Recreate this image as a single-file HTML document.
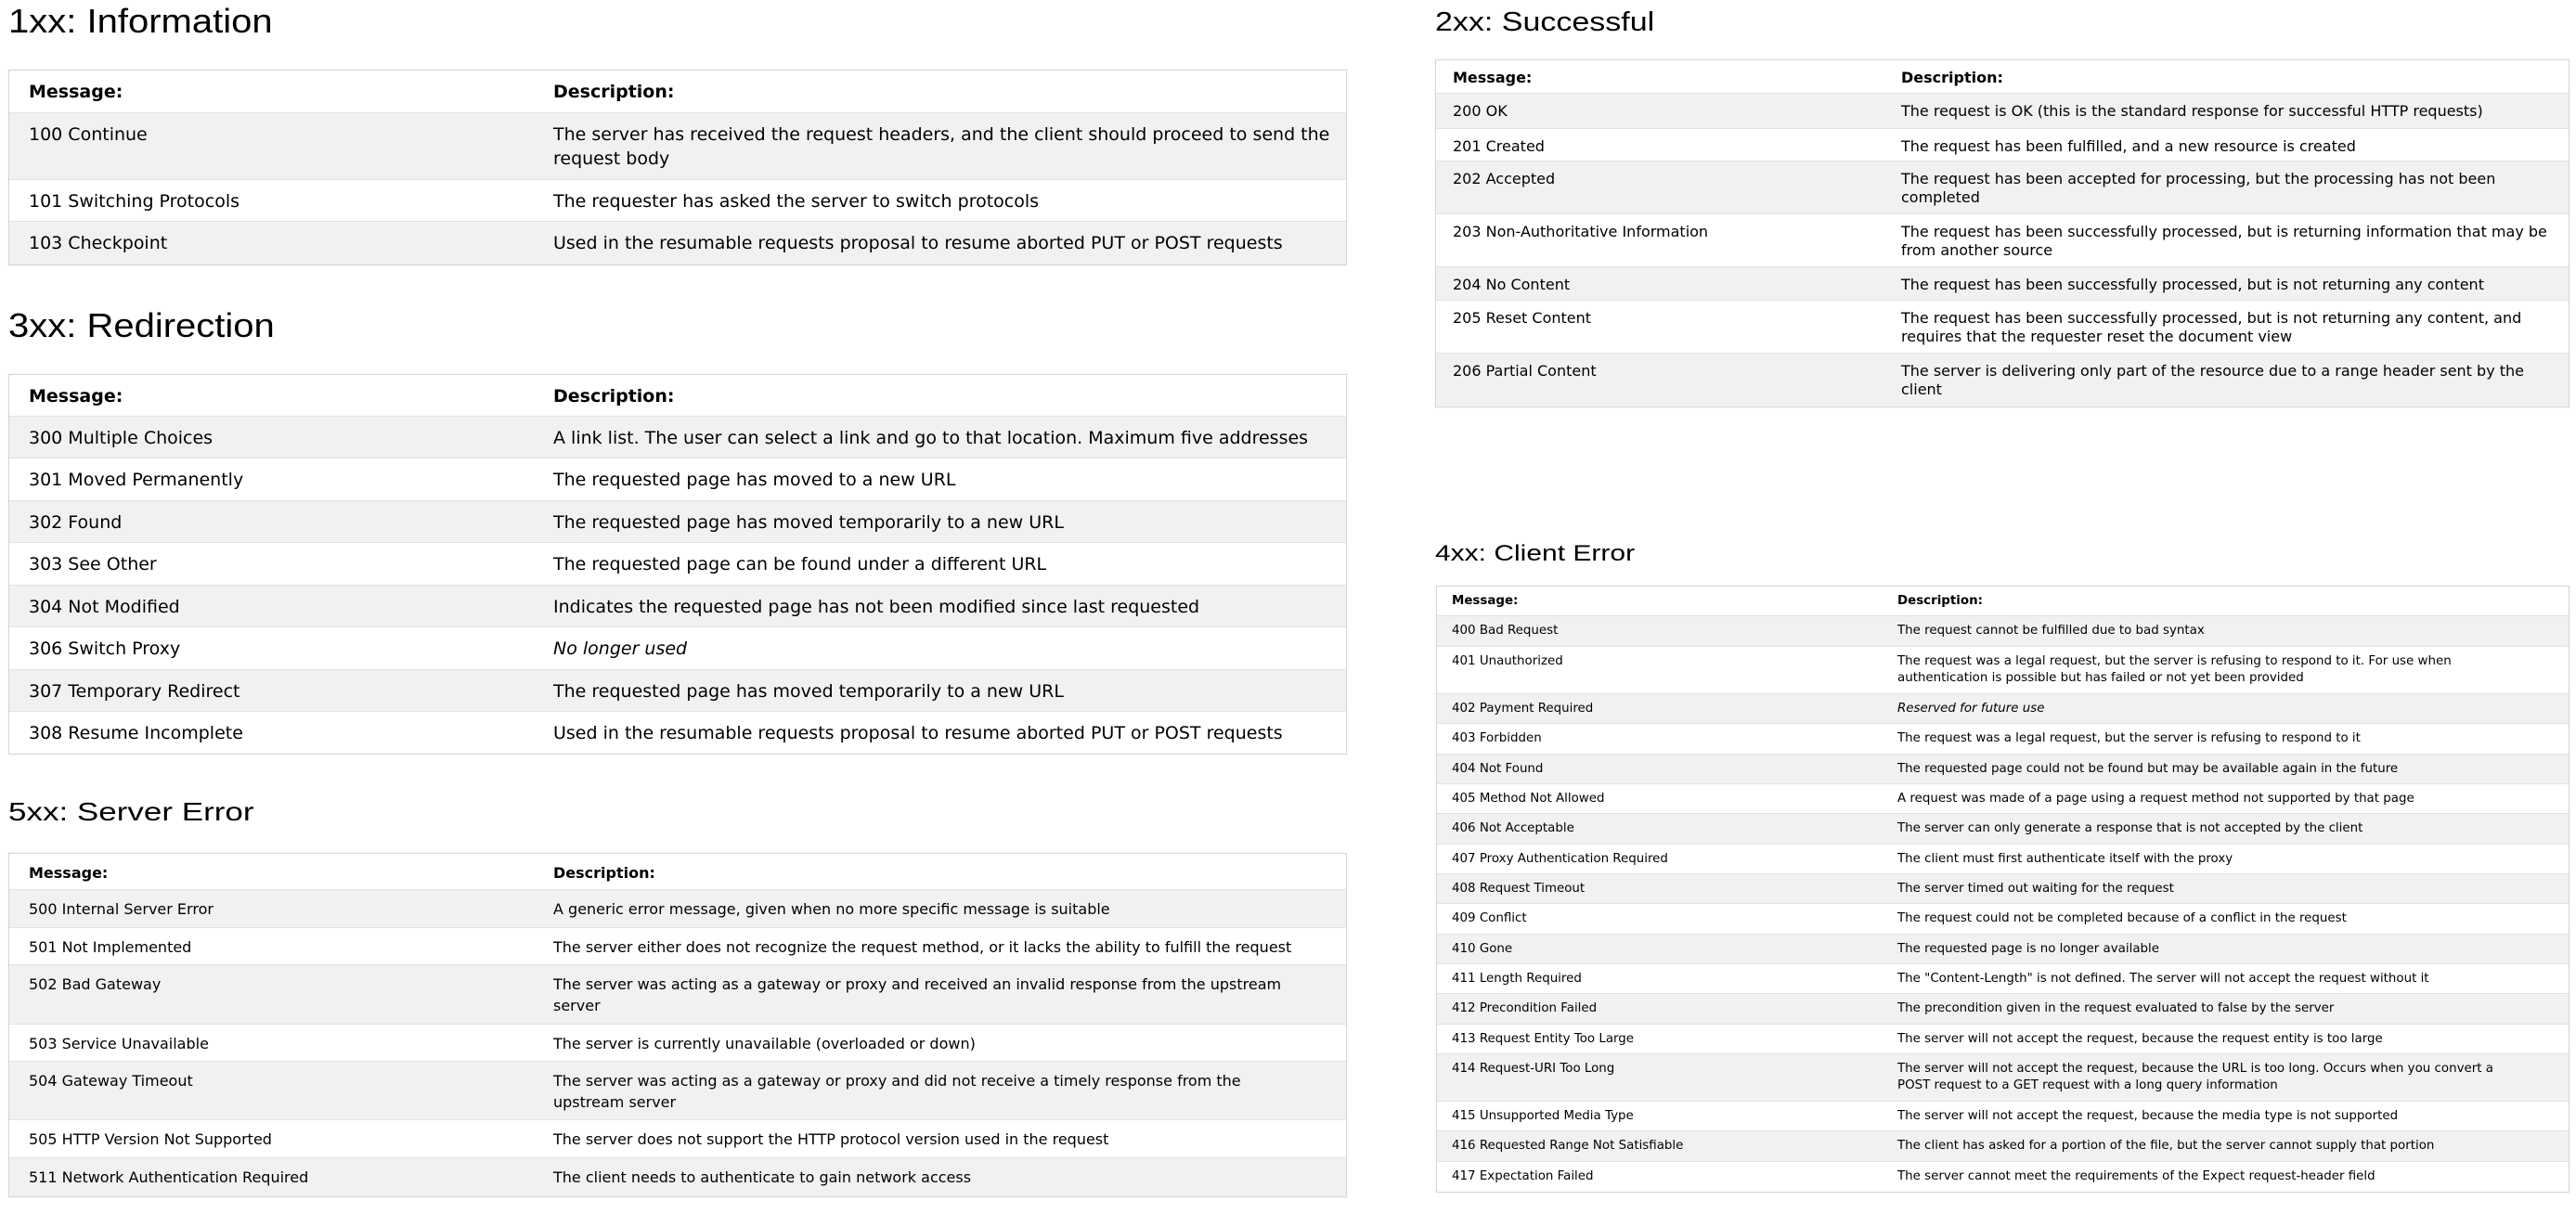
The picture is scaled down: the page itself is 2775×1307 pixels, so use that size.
<!DOCTYPE html>
<html><head><meta charset="utf-8"><style>
*{margin:0;padding:0;box-sizing:border-box}
body{width:2775px;height:1307px;background:#fff;position:relative;overflow:hidden;font-family:"DejaVu Sans","Liberation Sans",sans-serif;color:#000}
h2{position:absolute;font-family:"Liberation Sans",Arial,sans-serif;font-weight:normal;line-height:1;white-space:nowrap;color:#000;transform-origin:0 0}
.t{position:absolute;border:1px solid #d6d6d6;box-shadow:0 0 2px rgba(0,0,0,.08)}
.r{display:flex;border-bottom:1px solid #e2e2e2;white-space:nowrap}
.r:last-child{border-bottom:none}
.r:nth-child(even){background:#f1f1f1}
.r.h{font-weight:bold}
.c1{flex:none}
i{font-style:italic}
.A{left:9px;width:1442px;font-size:19px;line-height:26px}
.A .r{padding-top:10px;padding-left:21px}
.A .c1{width:565px}
.B{left:9px;width:1442px;font-size:16px;line-height:23px}
.B .r{padding-top:9px;padding-left:21px}
.B .c1{width:565px}
.C{left:1546px;width:1222px;font-size:16px;line-height:20px}
.C .r{padding-top:9px;padding-left:18px}
.C .c1{width:483px}
.D{left:1547px;width:1221px;font-size:13.4px;line-height:18px}
.D .r{padding-top:7px;padding-left:16px}
.D .c1{width:480px}
</style></head><body>

<h2 style="left:9px;top:5px;font-size:40px;transform:scaleY(.91)">1xx: Information</h2>
<div class="t A" style="top:75px">
<div class="r h" style="height:46px"><div class="c1">Message:</div><div>Description:</div></div>
<div class="r" style="height:72px"><div class="c1">100 Continue</div><div>The server has received the request headers, and the client should proceed to send the<br>request body</div></div>
<div class="r" style="height:45px"><div class="c1">101 Switching Protocols</div><div>The requester has asked the server to switch protocols</div></div>
<div class="r" style="height:46px"><div class="c1">103 Checkpoint</div><div>Used in the resumable requests proposal to resume aborted PUT or POST requests</div></div>
</div>

<h2 style="left:9px;top:333px;font-size:40px;transform:scaleY(.91)">3xx: Redirection</h2>
<div class="t A" style="top:403px">
<div class="r h" style="height:45px"><div class="c1">Message:</div><div>Description:</div></div>
<div class="r" style="height:45px"><div class="c1">300 Multiple Choices</div><div>A link list. The user can select a link and go to that location. Maximum five addresses</div></div>
<div class="r" style="height:46px"><div class="c1">301 Moved Permanently</div><div>The requested page has moved to a new URL</div></div>
<div class="r" style="height:45px"><div class="c1">302 Found</div><div>The requested page has moved temporarily to a new URL</div></div>
<div class="r" style="height:46px"><div class="c1">303 See Other</div><div>The requested page can be found under a different URL</div></div>
<div class="r" style="height:45px"><div class="c1">304 Not Modified</div><div>Indicates the requested page has not been modified since last requested</div></div>
<div class="r" style="height:46px"><div class="c1">306 Switch Proxy</div><div><i>No longer used</i></div></div>
<div class="r" style="height:45px"><div class="c1">307 Temporary Redirect</div><div>The requested page has moved temporarily to a new URL</div></div>
<div class="r" style="height:45px"><div class="c1">308 Resume Incomplete</div><div>Used in the resumable requests proposal to resume aborted PUT or POST requests</div></div>
</div>

<h2 style="left:9px;top:861px;font-size:35px;transform:scaleY(.8)">5xx: Server Error</h2>
<div class="t B" style="top:919px">
<div class="r h" style="height:39px"><div class="c1">Message:</div><div>Description:</div></div>
<div class="r" style="height:41px"><div class="c1">500 Internal Server Error</div><div>A generic error message, given when no more specific message is suitable</div></div>
<div class="r" style="height:40px"><div class="c1">501 Not Implemented</div><div>The server either does not recognize the request method, or it lacks the ability to fulfill the request</div></div>
<div class="r" style="height:64px"><div class="c1">502 Bad Gateway</div><div>The server was acting as a gateway or proxy and received an invalid response from the upstream<br>server</div></div>
<div class="r" style="height:40px"><div class="c1">503 Service Unavailable</div><div>The server is currently unavailable (overloaded or down)</div></div>
<div class="r" style="height:63px"><div class="c1">504 Gateway Timeout</div><div>The server was acting as a gateway or proxy and did not receive a timely response from the<br>upstream server</div></div>
<div class="r" style="height:41px"><div class="c1">505 HTTP Version Not Supported</div><div>The server does not support the HTTP protocol version used in the request</div></div>
<div class="r" style="height:41px"><div class="c1">511 Network Authentication Required</div><div>The client needs to authenticate to gain network access</div></div>
</div>

<h2 style="left:1546px;top:9px;font-size:34px;transform:scaleY(.85)">2xx: Successful</h2>
<div class="t C" style="top:64px">
<div class="r h" style="height:36px"><div class="c1">Message:</div><div>Description:</div></div>
<div class="r" style="height:38px"><div class="c1">200 OK</div><div>The request is OK (this is the standard response for successful HTTP requests)</div></div>
<div class="r" style="height:35px"><div class="c1">201 Created</div><div>The request has been fulfilled, and a new resource is created</div></div>
<div class="r" style="height:57px"><div class="c1">202 Accepted</div><div>The request has been accepted for processing, but the processing has not been<br>completed</div></div>
<div class="r" style="height:57px"><div class="c1">203 Non-Authoritative Information</div><div>The request has been successfully processed, but is returning information that may be<br>from another source</div></div>
<div class="r" style="height:36px"><div class="c1">204 No Content</div><div>The request has been successfully processed, but is not returning any content</div></div>
<div class="r" style="height:57px"><div class="c1">205 Reset Content</div><div>The request has been successfully processed, but is not returning any content, and<br>requires that the requester reset the document view</div></div>
<div class="r" style="height:57px"><div class="c1">206 Partial Content</div><div>The server is delivering only part of the resource due to a range header sent by the<br>client</div></div>
</div>

<h2 style="left:1546px;top:585px;font-size:30px;transform:scaleY(.8)">4xx: Client Error</h2>
<div class="t D" style="top:631px">
<div class="r h" style="height:32px"><div class="c1">Message:</div><div>Description:</div></div>
<div class="r" style="height:33px"><div class="c1">400 Bad Request</div><div>The request cannot be fulfilled due to bad syntax</div></div>
<div class="r" style="height:51px"><div class="c1">401 Unauthorized</div><div>The request was a legal request, but the server is refusing to respond to it. For use when<br>authentication is possible but has failed or not yet been provided</div></div>
<div class="r" style="height:32px"><div class="c1">402 Payment Required</div><div><i>Reserved for future use</i></div></div>
<div class="r" style="height:33px"><div class="c1">403 Forbidden</div><div>The request was a legal request, but the server is refusing to respond to it</div></div>
<div class="r" style="height:32px"><div class="c1">404 Not Found</div><div>The requested page could not be found but may be available again in the future</div></div>
<div class="r" style="height:32px"><div class="c1">405 Method Not Allowed</div><div>A request was made of a page using a request method not supported by that page</div></div>
<div class="r" style="height:33px"><div class="c1">406 Not Acceptable</div><div>The server can only generate a response that is not accepted by the client</div></div>
<div class="r" style="height:32px"><div class="c1">407 Proxy Authentication Required</div><div>The client must first authenticate itself with the proxy</div></div>
<div class="r" style="height:32px"><div class="c1">408 Request Timeout</div><div>The server timed out waiting for the request</div></div>
<div class="r" style="height:33px"><div class="c1">409 Conflict</div><div>The request could not be completed because of a conflict in the request</div></div>
<div class="r" style="height:32px"><div class="c1">410 Gone</div><div>The requested page is no longer available</div></div>
<div class="r" style="height:32px"><div class="c1">411 Length Required</div><div>The "Content-Length" is not defined. The server will not accept the request without it</div></div>
<div class="r" style="height:33px"><div class="c1">412 Precondition Failed</div><div>The precondition given in the request evaluated to false by the server</div></div>
<div class="r" style="height:32px"><div class="c1">413 Request Entity Too Large</div><div>The server will not accept the request, because the request entity is too large</div></div>
<div class="r" style="height:51px"><div class="c1">414 Request-URI Too Long</div><div>The server will not accept the request, because the URL is too long. Occurs when you convert a<br>POST request to a GET request with a long query information</div></div>
<div class="r" style="height:32px"><div class="c1">415 Unsupported Media Type</div><div>The server will not accept the request, because the media type is not supported</div></div>
<div class="r" style="height:33px"><div class="c1">416 Requested Range Not Satisfiable</div><div>The client has asked for a portion of the file, but the server cannot supply that portion</div></div>
<div class="r" style="height:32px"><div class="c1">417 Expectation Failed</div><div>The server cannot meet the requirements of the Expect request-header field</div></div>
</div>

</body></html>
